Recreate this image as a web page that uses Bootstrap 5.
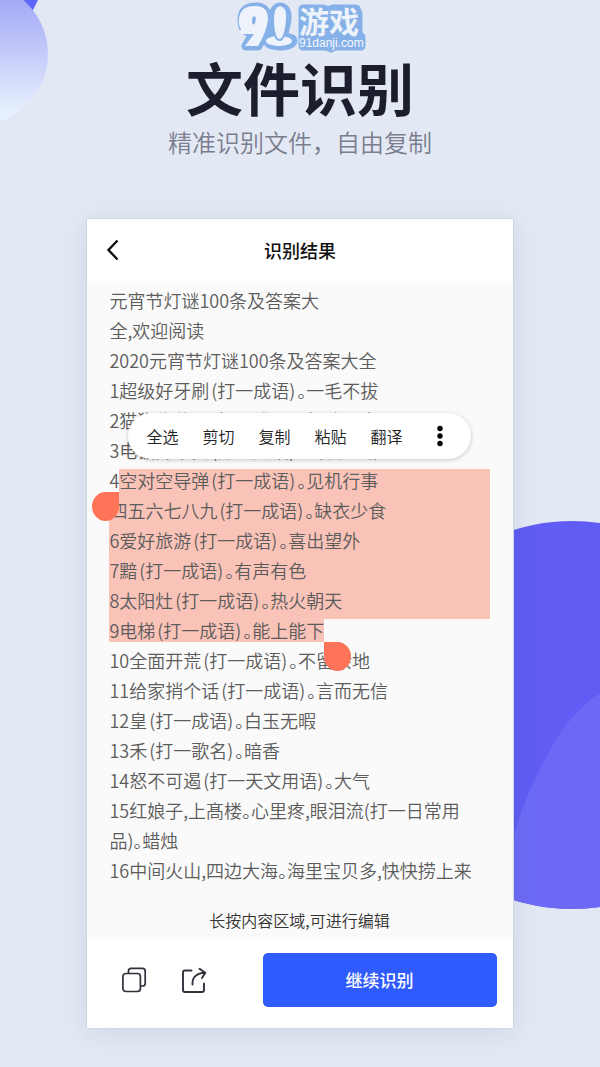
<!DOCTYPE html>
<html lang="zh-CN">
<head>
<meta charset="utf-8">
<meta name="viewport" content="width=device-width, initial-scale=1">
<title>文件识别</title>
<link href="https://cdn.jsdelivr.net/npm/bootstrap@5.3.0/dist/css/bootstrap.min.css" rel="stylesheet">
<style>
  body { font-family: "Noto Sans CJK SC", sans-serif; background: #e3e9f4; color: #1c1d2d; }
  .stage { min-height: 100vh; padding-bottom: 38px; }
  .deco { position: absolute; pointer-events: none; }
  .deco-top { left: 0; top: 0; }
  .deco-side { right: 0; top: 520px; }
  .headline { font-size: 57px; line-height: 62px; font-weight: 700; }
  .tagline { font-size: 24px; line-height: 32px; font-weight: 350; color: #7b7d8f; margin-top: 9px; }
  .phone { width: 71.2%; margin-top: 60px; background: #fff; outline: 1px solid #cfd6e4; outline-offset: -1px; box-shadow: 0 4px 24px rgba(60, 80, 130, .12); }
  .topbar { height: 63px; }
  .topbar h2 { font-size: 18px; line-height: 24px; font-weight: 500; color: #111; }
  .back { left: 20px; }
  .result { background: #fafafa; padding: 8px 24px 0 23px; }
  .result p { font-size: 18px; line-height: 23px; padding-bottom: 7px; font-weight: 350; color: #5c5c5c; font-feature-settings: "palt"; white-space: nowrap; }
  .clue { margin: 0 2px; }
  .picked { background: #fac3b8; }
  .result .picked-row { padding-bottom: 0; }
  .picked-row .picked { padding-bottom: 7px; }
  .grip { width: 27px; height: 29px; background: #ff7458; border-radius: 50%; position: absolute; top: 23px; }
  .grip-start { right: 100%; border-top-right-radius: 0; }
  .grip-end { left: 100%; border-top-left-radius: 0; }
  .tools { bottom: 40px; left: 19px; width: 343px; height: 46px; padding-left: 18px; background: #fff; border-radius: 23px; box-shadow: 0 1px 4px rgba(0, 0, 0, .22); gap: 24px; z-index: 2; }
  .tools button { font-size: 16px; line-height: 24px; font-weight: 350; color: #222; }
  .plain { background: none; border: 0; padding: 0; }
  .result .hint { font-size: 16px; line-height: 24px; color: #333; padding: 19px 0 5px; }
  .footbar { height: 92px; padding: 0 17px 6px 35px; gap: 34px; }
  .go { flex: 0 0 234px; height: 54px; font-size: 17px; font-weight: 500; background: #2f5bff; color: #fff; border: 0; border-radius: 5px; }
</style>
</head>
<body>
<main class="stage position-relative overflow-hidden d-flex flex-column align-items-center">
  <svg class="deco deco-top" width="60" height="130" viewBox="0 0 60 130" aria-hidden="true">
    <defs><linearGradient id="fade" x1="0" y1="0" x2="0" y2="1"><stop offset=".1" stop-color="#a3a8f6"/><stop offset=".9" stop-color="#e6effd"/></linearGradient></defs>
    <path d="M10 0H38L32 12Z" fill="#5f67fb"/>
    <circle cx="-23" cy="54" r="71" fill="url(#fade)"/>
  </svg>
  <svg class="deco deco-side" width="222" height="390" viewBox="0 0 222 390" aria-hidden="true">
    <defs><clipPath id="disc"><circle cx="194" cy="195" r="194"/></clipPath></defs>
    <circle cx="194" cy="195" r="194" fill="#605cf4"/>
    <path d="M222 173Q187 197 168 238Q147 275 136 315Q130 340 130 390H222Z" fill="#6c6af5" clip-path="url(#disc)"/>
  </svg>

  <svg width="146" height="55" viewBox="0 0 146 55" role="img" aria-label="91游戏 91danji.com">
    <g fill="#86b1e8" stroke="#86b1e8" stroke-width="9" stroke-linejoin="round">
      <path d="M15 20Q15 7 28 7Q40 6 40 19Q40 32 31 46H19L27 32Q15 34 15 20Z"/>
      <path d="M53 7Q61 8 60 20L56 38Q66 37 66 41Q64 46 52 46Q41 45 41 42L48 36L46 20Q46 8 53 7Z"/>
      <path d="M30 10H48V40H36Z" stroke-width="0"/>
      <path d="M76 9H96L101 11L106 9H129L131 14V35L134 37V46H108L104 48L100 46H76Z"/>
    </g>
    <path fill="#eef3fb" fill-rule="evenodd" d="M12 19Q13 6 28 6Q41 6 41 19Q40 31 31 46H18L27 34H12L14 29Q11 25 12 19ZM27 16Q25 17 25 22Q26 27 28 23Q30 16 27 16Z"/>
    <ellipse cx="52" cy="41" rx="13" ry="5" fill="#eef3fb"/>
    <path d="M53 5Q61 6 60 19Q59 34 55 39Q53 41 50 39Q46 34 46 19Q46 6 53 5Z" fill="#eef3fb" stroke="#86b1e8" stroke-width="2"/>
    <text x="72" y="33" font-size="30" font-weight="700" fill="#eef3fb" font-family="Noto Sans CJK SC, sans-serif">游戏</text>
    <text x="72" y="47" font-size="12" fill="#f4f8ff" font-family="Liberation Sans, sans-serif">91danji.com</text>
  </svg>

  <h1 class="headline mb-0">文件识别</h1>
  <div class="tagline">精准识别文件，自由复制</div>

  <section class="phone position-relative">
    <header class="topbar position-relative d-flex align-items-center justify-content-center">
      <button class="plain back position-absolute d-flex" type="button" aria-label="返回">
        <svg width="14" height="22" viewBox="0 0 14 22" fill="none" stroke="#111" stroke-width="2.400"><path d="M11.500 1.500L2.500 11L11.500 20.500"/></svg>
      </button>
      <h2 class="mb-0">识别结果</h2>
    </header>

    <div class="result">
      <p class="mb-0">元宵节灯谜100条及答案大</p>
      <p class="mb-0">全,欢迎阅读</p>
      <p class="mb-0">2020元宵节灯谜100条及答案大全</p>
      <p class="mb-0">1超级好牙刷<span class="clue">(打一成语)</span>。一毛不拔</p>
      <p class="mb-0">2猫狗像什么<span class="clue">(打一成语)</span>。如狼似虎</p>
      <p class="mb-0">3电锯开木头<span class="clue">(打一成语)</span>。当机立断</p>
      <div class="position-relative">
        <p class="picked-row mb-0 d-flex"><span>4</span><span class="picked position-relative flex-grow-1">空对空导弹<span class="clue">(打一成语)</span>。见机行事<i class="grip grip-start"></i></span></p>
        <div class="tools position-absolute d-flex align-items-center" role="toolbar" aria-label="编辑">
          <button class="plain" type="button">全选</button>
          <button class="plain" type="button">剪切</button>
          <button class="plain" type="button">复制</button>
          <button class="plain" type="button">粘贴</button>
          <button class="plain" type="button">翻译</button>
          <button class="plain d-flex ps-1" type="button" aria-label="更多">
            <svg width="16" height="22" viewBox="0 0 16 22" fill="#000"><circle cx="10" cy="3.500" r="2.700"/><circle cx="10" cy="11" r="2.700"/><circle cx="10" cy="18.500" r="2.700"/></svg>
          </button>
        </div>
      </div>
      <p class="picked mb-0">四五六七八九<span class="clue">(打一成语)</span>。缺衣少食</p>
      <p class="picked mb-0">6爱好旅游<span class="clue">(打一成语)</span>。喜出望外</p>
      <p class="picked mb-0">7黯<span class="clue">(打一成语)</span>。有声有色</p>
      <p class="picked mb-0">8太阳灶<span class="clue">(打一成语)</span>。热火朝天</p>
      <p class="mb-0 d-flex"><span class="picked position-relative">9电梯<span class="clue">(打一成语)</span>。能上能下<i class="grip grip-end"></i></span></p>
      <p class="mb-0">10全面开荒<span class="clue">(打一成语)</span>。不留余地</p>
      <p class="mb-0">11给家捎个话<span class="clue">(打一成语)</span>。言而无信</p>
      <p class="mb-0">12皇<span class="clue">(打一成语)</span>。白玉无暇</p>
      <p class="mb-0">13禾<span class="clue">(打一歌名)</span>。暗香</p>
      <p class="mb-0">14怒不可遏<span class="clue">(打一天文用语)</span>。大气</p>
      <p class="mb-0">15红娘子,上髙楼。心里疼,眼泪流(打一日常用</p>
      <p class="mb-0">品)。蜡烛</p>
      <p class="mb-0">16中间火山,四边大海。海里宝贝多,快快捞上来</p>
      <p class="hint mb-0 text-center">长按内容区域,可进行编辑</p>
    </div>

    <footer class="footbar d-flex align-items-center">
      <button class="plain d-flex" type="button" aria-label="复制">
        <svg width="26" height="28" viewBox="0 0 26 28" fill="none" stroke="#30323b" stroke-width="1.700"><rect x="1.900" y="7.500" width="17.500" height="18" rx="3"/><path d="M7.500 7V5Q7.500 2.300 10 2.300H21.500Q24.200 2.300 24.200 5V17.500Q24.200 20 21.500 20H19.700"/></svg>
      </button>
      <button class="plain d-flex" type="button" aria-label="分享">
        <svg width="26" height="28" viewBox="0 0 26 28" fill="none" stroke="#30323b" stroke-width="1.900" stroke-linecap="round" stroke-linejoin="round"><path d="M10.500 4.500H4Q2 4.500 2 6.500V24Q2 26 4 26H21Q23 26 23 24V17.500M11.500 18.500C11 11 16 7 24 6.800M18.500 2.800L24.300 6.800L21 12"/></svg>
      </button>
      <button class="go ms-auto" type="button">继续识别</button>
    </footer>
  </section>
</main>
<script src="https://cdn.jsdelivr.net/npm/bootstrap@5.3.0/dist/js/bootstrap.bundle.min.js"></script>
</body>
</html>
